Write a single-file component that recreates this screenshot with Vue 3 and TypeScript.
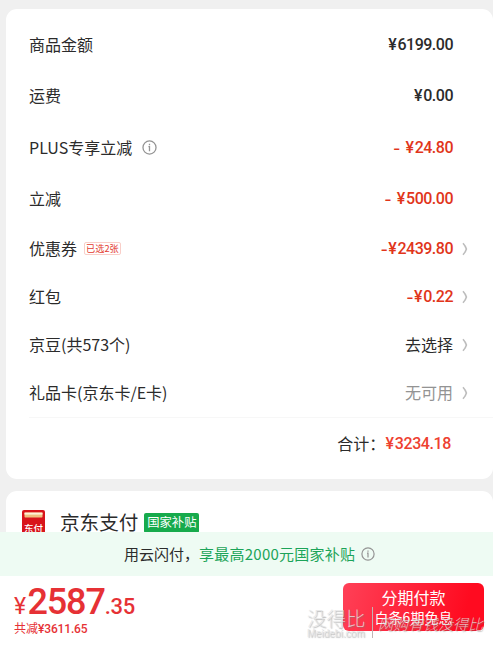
<script setup lang="ts">
interface Row {
  label: string
  tone: 'dark' | 'red' | 'text' | 'muted'
  sign?: string
  amount?: string
  text?: string
  info?: boolean
  tag?: string
  link?: boolean
}

const rows: Row[] = [
  { label: '商品金额', amount: '6199.00', tone: 'dark' },
  { label: '运费', amount: '0.00', tone: 'dark' },
  { label: 'PLUS专享立减', sign: '- ', amount: '24.80', tone: 'red', info: true },
  { label: '立减', sign: '- ', amount: '500.00', tone: 'red' },
  { label: '优惠券', sign: '-', amount: '2439.80', tone: 'red', tag: '已选2张', link: true },
  { label: '红包', sign: '-', amount: '0.22', tone: 'red', link: true },
  { label: '京豆(共573个)', text: '去选择', tone: 'text', link: true },
  { label: '礼品卡(京东卡/E卡)', text: '无可用', tone: 'muted', link: true },
]
</script>

<template>
  <div class="page">
    <main class="content">
      <section class="card summary">
        <div v-for="row in rows" :key="row.label" class="row" :class="{ compact: row.link }">
          <span class="label">{{ row.label }}</span>
          <svg v-if="row.info" class="info" viewBox="0 0 14 14">
            <circle cx="7" cy="7" r="6.1" />
            <path d="M7 3.4v1.4M6 6.2H7v4.2" />
          </svg>
          <span v-if="row.tag" class="tag">{{ row.tag }}</span>
          <span class="value" :class="row.tone">
            <template v-if="row.amount"><span v-if="row.sign" class="sign">{{ row.sign }}</span><span class="currency">¥</span>{{ row.amount }}</template>
            <template v-else>{{ row.text }}</template>
          </span>
          <svg v-if="row.link" class="chevron" viewBox="0 0 6 14">
            <path d="M1 1.2Q3.6 4 4.4 7Q3.6 10 1 12.8" />
          </svg>
        </div>
        <div class="total">
          <span>合计：</span>
          <span class="amount"><span class="currency">¥</span>3234.18</span>
        </div>
      </section>

      <section class="card payment">
        <svg class="logo" viewBox="0 0 23 27">
          <rect width="23" height="27" rx="2" fill="#d8141b" />
          <rect x="2.5" y="2.5" width="18" height="5" rx="0.8" fill="#f0c080" />
          <path d="M2.5 3.6h18" stroke="#fff3d8" stroke-width="2" />
          <text x="11.5" y="21.6" text-anchor="middle">东付</text>
        </svg>
        <span class="pay-name">京东支付</span>
        <span class="subsidy">国家补贴</span>
      </section>
    </main>

    <div class="banner">
      <span class="label">用云闪付，</span>
      <span class="label green">享最高2000元国家补贴</span>
      <svg class="info" viewBox="0 0 14 14">
        <circle cx="7" cy="7" r="6.1" />
        <path d="M7 3.4v1.4M6 6.2H7v4.2" />
      </svg>
    </div>

    <footer class="bar">
      <div class="price-block">
        <div class="price"><span class="yen">¥</span><span class="big">2587</span><span class="cents">.35</span></div>
        <div class="saved">共减<span>¥3611.65</span></div>
      </div>
      <button class="pay">
        <span class="pay-title">分期付款</span>
        <span class="pay-sub">白条6期免息</span>
      </button>
      <div class="watermark">
        <div class="mark">
          <span class="mark-name">没得比</span>
          <span class="mark-site">Meidebi.com</span>
        </div>
        <span class="slogan">网购有钱没得比</span>
      </div>
    </footer>
  </div>
</template>

<style>
body {
  margin: 0;
}
</style>

<style scoped>
.page {
  width: 493px;
  height: 661px;
  display: flex;
  flex-direction: column;
  overflow: hidden;
  background: #f0f0f0;
  color: #2b2b2b;
  font-family: "Noto Sans CJK SC", sans-serif;
}
.content {
  height: 532px;
  box-sizing: border-box;
  padding: 9px 0 0 6px;
  overflow: hidden;
  display: flex;
  flex-direction: column;
  gap: 12px;
}
.card {
  background: #fff;
  border-radius: 11px;
  flex: none;
  box-sizing: border-box;
}
.summary {
  height: 470px;
  padding: 10px 0 0 23px;
}
.row {
  display: flex;
  align-items: center;
  height: 51.5px;
  padding-right: 40px;
  font-size: 16px;
  line-height: 24px;
}
.row.compact {
  height: 48px;
  padding-right: 25px;
}
.label,
.text,
.muted {
  padding-bottom: 2px;
}
.info {
  width: 15px;
  height: 15px;
  margin-left: 10px;
  fill: none;
  stroke: #949494;
  stroke-width: 1.2;
}
.tag {
  margin: 0 0 1px 7px;
  padding: 0 1px;
  border: 1px solid #f9cec8;
  border-radius: 2px;
  font-size: 9.2px;
  line-height: 11px;
  color: #e33a2f;
}
.value {
  display: flex;
  margin-left: auto;
}
.dark,
.red,
.amount {
  font-family: Roboto, sans-serif;
  font-weight: 500;
  letter-spacing: -0.5px;
}
.red {
  color: #e1351a;
}
.muted {
  color: #939393;
}
.sign {
  font-family: Inter, sans-serif;
  letter-spacing: 0.4px;
  white-space: pre;
}
.currency {
  margin-right: 1.3px;
}
.chevron {
  width: 6px;
  height: 14px;
  margin-left: 9px;
  fill: none;
  stroke: #bdbdbd;
  stroke-width: 1.6;
}
.total {
  display: flex;
  align-items: center;
  justify-content: flex-end;
  height: 50px;
  padding-right: 42px;
  border-top: 1px solid #f7f7f7;
  font-size: 16px;
}
.amount {
  color: #ee4030;
  letter-spacing: -0.4px;
}
.payment {
  display: flex;
  height: 80px;
  padding: 16px 0 0 16px;
}
.logo {
  width: 23px;
  height: 27px;
  margin-top: 3px;
}
.logo text {
  fill: #fff;
  font-size: 9.5px;
  font-weight: 500;
}
.pay-name {
  margin-left: 15px;
  font-size: 19.6px;
  line-height: 29px;
}
.subsidy {
  margin: 6px 0 0 6px;
  width: 55px;
  height: 20px;
  border-radius: 2px;
  background: #17aa4c;
  color: #fff;
  font-size: 12.3px;
  line-height: 19px;
  text-align: center;
}
.banner {
  display: flex;
  align-items: center;
  height: 44px;
  padding-left: 124px;
  background: #eefbf3;
  font-size: 15px;
}
.green {
  color: #1ca459;
  letter-spacing: 0.25px;
}
.banner .info {
  width: 14px;
  height: 14px;
  margin-left: 6px;
  margin-bottom: 1px;
}
.bar {
  position: relative;
  display: flex;
  justify-content: space-between;
  height: 85px;
  box-sizing: border-box;
  padding: 7px 9px 0 14px;
  background: #fff;
}
.price-block {
  color: #e63135;
}
.price {
  display: flex;
  align-items: baseline;
  height: 36px;
  line-height: 38px;
  font-family: Roboto, sans-serif;
  font-weight: 500;
}
.yen {
  font-size: 23px;
  font-weight: 400;
  margin-right: 1.5px;
}
.big {
  font-size: 36px;
  letter-spacing: -1.2px;
}
.cents {
  font-size: 22px;
  letter-spacing: -0.2px;
}
.saved {
  font-size: 12px;
  line-height: 17px;
}
.saved span {
  font-family: Roboto, sans-serif;
  font-weight: 500;
  letter-spacing: -0.15px;
}
.pay {
  display: flex;
  flex-direction: column;
  align-items: center;
  width: 141px;
  height: 48px;
  padding: 3px 0 0;
  border: 0;
  border-radius: 6px;
  background: linear-gradient(105deg, #ff4057, #ff0b20 85%);
  color: #fff;
  font-family: inherit;
}
.pay-title {
  font-size: 16px;
  line-height: 22px;
}
.pay-sub {
  font-size: 14px;
  line-height: 19px;
}
.watermark {
  position: absolute;
  left: 307px;
  top: 31px;
  display: flex;
  color: rgba(228, 228, 228, 0.8);
  text-shadow: 1px 1px 1px rgba(120, 120, 120, 0.5);
}
.mark {
  display: flex;
  flex-direction: column;
  width: 65px;
  height: 31px;
  border-right: 1px solid #c2b4b4;
}
.mark-name {
  font-size: 19.5px;
  font-weight: 300;
  line-height: 21px;
}
.mark-site {
  font-family: "Liberation Sans", sans-serif;
  font-size: 10.2px;
  line-height: 12px;
}
.slogan {
  margin-left: 5px;
  font-size: 15px;
  font-style: italic;
  font-weight: 300;
  line-height: 34px;
}
</style>
